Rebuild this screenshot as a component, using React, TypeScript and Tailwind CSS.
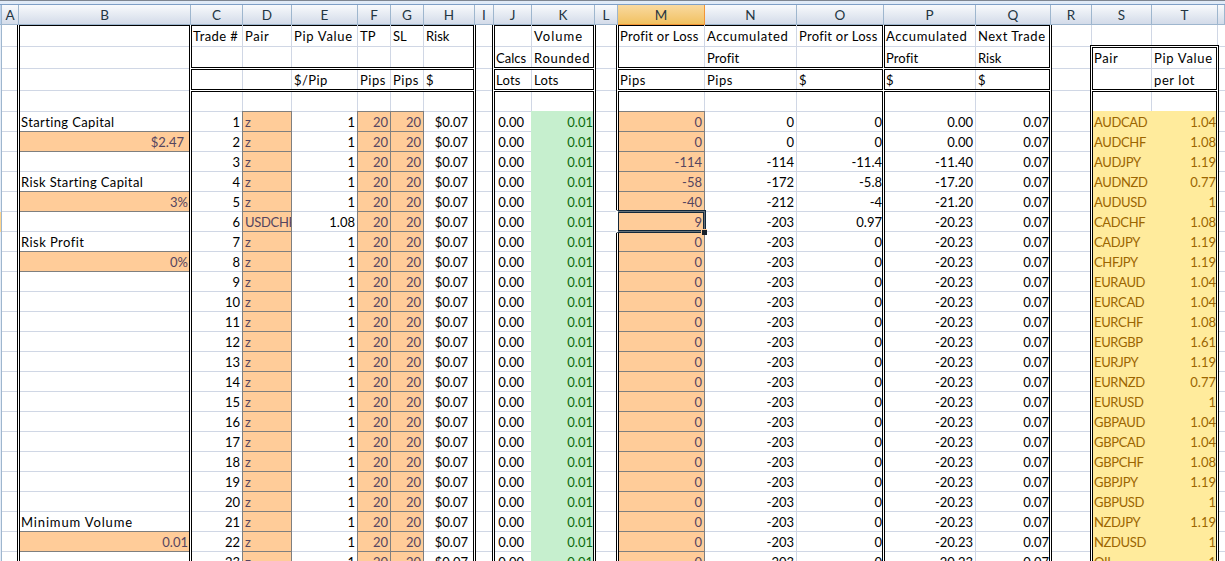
import React from "react";

type Align = "l" | "r";
type Tone = "input" | "green" | "yellow" | "plain";

interface Column {
  id: string;
  width: string;
  frame?: string;
  edgeLeft?: boolean;
  edgeRight?: boolean;
  grid?: "line" | "blank";
  double?: boolean;
  head?: [string, string, string];
  headClass?: string;
  align?: Align;
  tone?: Tone;
  pad?: string;
  values?: string[];
}

const ROWS = 23;
const fill = (value: string) => Array.from({ length: ROWS }, () => value);
const series = (first: string[], rest: string) => [...first, ...fill(rest)].slice(0, ROWS);

const pairs = ["AUDCAD", "AUDCHF", "AUDJPY", "AUDNZD", "AUDUSD", "CADCHF", "CADJPY", "CHFJPY", "EURAUD", "EURCAD", "EURCHF", "EURGBP", "EURJPY", "EURNZD", "EURUSD", "GBPAUD", "GBPCAD", "GBPCHF", "GBPJPY", "GBPUSD", "NZDJPY", "NZDUSD", "OIL"];
const pipValues = ["1.04", "1.08", "1.19", "0.77", "1", "1.08", "1.19", "1.19", "1.04", "1.04", "1.08", "1.61", "1.19", "0.77", "1", "1.04", "1.04", "1.08", "1.19", "1", "1.19", "1", "1"];

const capital = fill("");
capital[0] = "Starting Capital";
capital[1] = "$2.47";
capital[3] = "Risk Starting Capital";
capital[4] = "3%";
capital[6] = "Risk Profit";
capital[7] = "0%";
capital[20] = "Minimum Volume";
capital[21] = "0.01";
const capitalInputs = [1, 4, 7, 21];

const tracking: Record<string, string> = {
  "Starting Capital": "tracking-[0.38px]",
  "Risk Starting Capital": "tracking-[0.38px]",
  "Risk Profit": "tracking-[0.45px]",
  "Minimum Volume": "tracking-[0.85px]",
  "Trade #": "tracking-[0.4px]",
  Pair: "tracking-[0.6px]",
  "Pip Value": "tracking-[0.7px]",
  "per lot": "tracking-[0.6px]",
  Accumulated: "tracking-[0.65px]",
  "Profit or Loss": "tracking-[0.25px]",
  Profit: "tracking-[0.1px]",
  "Next Trade": "tracking-[0.55px]",
  Volume: "tracking-[1px]",
  Rounded: "tracking-[0.75px]",
  Pips: "tracking-[0.5px]",
  Lots: "tracking-[0.25px]",
  "$/Pip": "tracking-[0.4px]",
  USDCHF: "tracking-[-0.3px]",
};

const columns: Column[] = [
  { id: "A", width: "w-[17px]", frame: "border-r", grid: "blank" },
  { id: "B", width: "w-[172px]", frame: "border-x border-t", grid: "blank", values: capital },
  { id: "C", width: "w-[52px]", frame: "border-l border-t", edgeLeft: true, double: true, head: ["Trade #", "", ""], headClass: "-ml-px", align: "r", values: Array.from({ length: ROWS }, (_, i) => String(i + 1)) },
  { id: "D", width: "w-[49px]", frame: "border-t", double: true, head: ["Pair", "", ""], tone: "input", values: series(["z", "z", "z", "z", "z", "USDCHF"], "z") },
  { id: "E", width: "w-[66px]", frame: "border-t", double: true, head: ["Pip Value", "", "$/Pip"], align: "r", values: series(["1", "1", "1", "1", "1", "1.08"], "1") },
  { id: "F", width: "w-[33px]", frame: "border-t", double: true, head: ["TP", "", "Pips"], align: "r", tone: "input", values: fill("20") },
  { id: "G", width: "w-[33px]", frame: "border-t", double: true, head: ["SL", "", "Pips"], align: "r", tone: "input", values: fill("20") },
  { id: "H", width: "w-[51px]", frame: "border-r border-t", edgeRight: true, double: true, head: ["Risk", "", "$"], align: "r", pad: "pr-[5px]", values: fill("$0.07") },
  { id: "I", width: "w-[19px]", frame: "border-x", grid: "blank" },
  { id: "J", width: "w-[38px]", frame: "border-l border-t", edgeLeft: true, double: true, head: ["", "Calcs", "Lots"], headClass: "-ml-px", align: "r", pad: "pr-[7px]", values: fill("0.00") },
  { id: "K", width: "w-[63px]", frame: "border-r border-t", edgeRight: true, double: true, head: ["Volume", "Rounded", "Lots"], align: "r", tone: "green", pad: "pr-0", values: fill("0.01") },
  { id: "L", width: "w-[23px]", frame: "border-x", grid: "blank" },
  { id: "M", width: "w-[87px]", frame: "border-l border-t", edgeLeft: true, double: true, head: ["Profit or Loss", "", "Pips"], headClass: "-ml-px", align: "r", tone: "input", values: series(["0", "0", "-114", "-58", "-40", "9"], "0") },
  { id: "N", width: "w-[92px]", frame: "border-t", double: true, head: ["Accumulated", "Profit", "Pips"], align: "r", values: series(["0", "0", "-114", "-172", "-212"], "-203") },
  { id: "O", width: "w-[87px]", frame: "border-r border-t", edgeRight: true, double: true, head: ["Profit or Loss", "", "$"], align: "r", pad: "pr-0", values: series(["0", "0", "-11.4", "-5.8", "-4", "0.97"], "0") },
  { id: "P", width: "w-[92px]", frame: "border-l border-t", edgeLeft: true, double: true, head: ["Accumulated", "Profit", "$"], headClass: "-ml-px", align: "r", values: series(["0.00", "0.00", "-11.40", "-17.20", "-21.20"], "-20.23") },
  { id: "Q", width: "w-[75px]", frame: "border-r border-t", edgeRight: true, double: true, head: ["Next Trade", "Risk", "$"], align: "r", pad: "pr-0", values: fill("0.07") },
];

const GRID = "border-[#d0d7e5]";

function Cell({ children, height = "h-[20px]", align = "l", tone = "plain", pad = "", first = false, edgeLeft = false, edgeRight = false }: {
  children?: string; height?: string; align?: Align; tone?: Tone; pad?: string; first?: boolean; edgeLeft?: boolean; edgeRight?: boolean;
}) {
  const side = align === "r" ? `justify-end ${pad || "pr-[2px]"}` : `justify-start ${edgeLeft ? "pl-px" : "pl-[2px]"}`;
  const tones: Record<Tone, string> = {
    plain: `border-b ${GRID} text-black`,
    input: "border-b border-[#7f7f7f] bg-[#ffcc99] text-[#55455f]",
    green: "border-b border-[#c6efce] bg-[#c6efce] text-[#0c6b0c]",
    yellow: "border-b border-[#ffeb9c] bg-[#ffeb9c] text-[#9c6500] tracking-[-0.1px]",
  };
  const lead = first && tone === "input" ? "-mt-px h-[21px] border-t" : first && tone !== "plain" ? "-mt-px h-[21px]" : height;
  const bleed = tone === "input" ? `${edgeLeft ? "" : "-ml-px border-l"} ${edgeRight ? "" : "-mr-px border-r"}` : tone === "plain" ? "" : edgeLeft ? "-mr-px" : "-ml-px";
  return (
    <div className={`relative flex shrink-0 items-end overflow-hidden whitespace-nowrap ${lead} ${side} ${tones[tone]} ${bleed}`}>
      <span className={`leading-[18px] ${tracking[children ?? ""] ?? (tone === "yellow" && align === "l" ? "tracking-[-0.35px]" : "tracking-normal")}`}>{children}</span>
    </div>
  );
}

function DoubleRule({ left }: { left?: boolean }) {
  return <div className={`relative -mr-px h-[3px] shrink-0 border-y border-black bg-white ${left ? "-ml-px" : ""}`} />;
}

function HeadCell({ text, height, nudge = "" }: { text: string; height: string; nudge?: string }) {
  return (
    <div className={`flex shrink-0 items-end whitespace-nowrap pl-[2px] ${height}`}>
      <span className={`leading-[18px] ${nudge} ${tracking[text] ?? ""}`}>{text}</span>
    </div>
  );
}

function SheetColumn({ col }: { col: Column }) {
  const blank = col.grid === "blank" || col.edgeRight;
  const topped = col.frame?.includes("border-t");
  return (
    <div className={`flex h-full shrink-0 border-r ${col.width} ${blank ? "border-white" : GRID}`}>
      <div className={`flex min-w-0 flex-1 flex-col border-black ${col.frame ?? ""}`}>
        {col.double && col.head ? (
          <>
            <div className={`h-[21px] shrink-0 border-b ${GRID}`}><HeadCell text={col.head[0]} height="h-[19px]" nudge={col.headClass} /></div>
            <HeadCell text={col.head[1]} height="h-[20px]" nudge={col.headClass} />
            <DoubleRule left={col.edgeLeft} />
            <HeadCell text={col.head[2]} height="h-[19px]" nudge={col.headClass} />
            <DoubleRule left={col.edgeLeft} />
            <div className={`h-[20px] shrink-0 border-b ${GRID}`} />
          </>
        ) : (
          <>
            <Cell height={topped ? "h-[21px]" : "h-[22px]"} />
            <Cell height="h-[22px]" />
            <Cell height="h-[22px]" />
            <Cell height="h-[21px]" />
          </>
        )}
        {(col.values ?? fill("")).map((value, i) => {
          if (col.id === "B") {
            const input = capitalInputs.includes(i);
            return (
              <div key={i} className={`flex h-[20px] shrink-0 items-end border-b ${input ? "justify-end bg-[#ffcc99] text-[#55455f]" : "pl-px text-black"} ${input || capitalInputs.includes(i + 1) ? "border-[#7f7f7f]" : GRID} ${i === 1 ? "pr-[5px]" : input ? "pr-px" : ""}`}>
                <span className={`leading-[18px] ${tracking[value] ?? ""}`}>{value}</span>
              </div>
            );
          }
          return (
            <Cell key={i} first={i === 0} align={col.align} tone={col.tone} pad={col.pad} edgeLeft={col.edgeLeft} edgeRight={col.edgeRight}>
              {value}
            </Cell>
          );
        })}
      </div>
    </div>
  );
}

function Spacer() {
  return (
    <div className="flex w-[41px] shrink-0 border-r border-white">
      <div className="flex flex-1 flex-col border-l border-black">
        <div className={`-mr-px h-[20px] shrink-0 border-r ${GRID}`} />
        <div className="flex flex-1 flex-col border-r border-black">
          <Cell height="h-[2px]" />
          <Cell height="h-[22px]" />
          <Cell height="h-[22px]" />
          <Cell height="h-[21px]" />
          {fill("").map((_, i) => <Cell key={i} />)}
        </div>
      </div>
    </div>
  );
}

function LookupColumn({ width, left, head, values }: { width: string; left?: boolean; head: [string, string]; values: string[] }) {
  return (
    <div className={`flex shrink-0 flex-col ${width}`}>
      <div className={`h-[20px] shrink-0 border-r ${GRID}`} />
      <div className={`h-px shrink-0 bg-black ${left ? "-ml-px" : ""}`} />
      <div className="h-px shrink-0" />
      <div className={`flex flex-1 border-r ${left ? GRID : "border-white"}`}>
        <div className="flex min-w-0 flex-1 flex-col">
          <div className={`h-px shrink-0 bg-black ${left ? "-mr-px" : ""}`} />
          <div className={`flex min-w-0 flex-1 flex-col border-black ${left ? "border-l" : "border-r"}`}>
            <div className={`h-[21px] shrink-0 border-b ${GRID}`}><HeadCell text={head[0]} height="h-[19px]" nudge={left ? "-ml-px" : ""} /></div>
            <HeadCell text={head[1]} height="h-[20px]" />
            <DoubleRule left={left} />
            <div className={`h-[20px] shrink-0 border-b ${GRID}`} />
            {values.map((value, i) => (
              <Cell key={i} first={i === 0} align={left ? "l" : "r"} tone="yellow" pad="pr-0" edgeLeft={left}>{value}</Cell>
            ))}
          </div>
        </div>
      </div>
    </div>
  );
}

const headers = [
  ...columns.map(({ id, width }) => ({ id, width })),
  { id: "R", width: "w-[41px]" },
  { id: "S", width: "w-[60px]" },
  { id: "T", width: "w-[66px]" },
  { id: "", width: "w-[7px]" },
];

export default function App() {
  return (
    <div className="flex h-[561px] w-[1225px] flex-col overflow-hidden bg-white font-['Lato',sans-serif] text-[13px] text-black">
      <div className="h-[5px] shrink-0 border-b border-t border-b-[#7e9fc6] border-t-[#7d8590] bg-[#dfeaf7]" />
      <div className="flex h-[20px] shrink-0">
        <div className="w-[2px] shrink-0 border-b border-r border-[#9eb6ce] bg-[#b9d1ed]" />
        {headers.map(({ id, width }) => (
          <div key={id} className={`flex shrink-0 items-center justify-center border-b border-r pt-px text-[13.5px] text-[#243642] ${width} ${id === "M" ? "border-[#f29536] bg-linear-to-b from-[#f9d99f] to-[#f1c15f]" : "border-[#9eb6ce] bg-linear-to-b from-[#f8fafc] to-[#d3dbe9]"}`}>
            {id}
          </div>
        ))}
      </div>
      <div className="relative flex min-h-0 flex-1 overflow-hidden">
        <div className="w-[2px] shrink-0 border-r border-[#9eb6ce] bg-[#e4ecf7]">
          <div className="mt-[187px] h-[20px] bg-[#ffd58d]" />
        </div>
        {columns.map((col) => <SheetColumn key={col.id} col={col} />)}
        <Spacer />
        <LookupColumn width="w-[60px]" left head={["Pair", ""]} values={pairs} />
        <LookupColumn width="w-[66px]" head={["Pip Value", "per lot"]} values={pipValues} />
        <div className="flex w-[7px] shrink-0 flex-col">
          <div className="h-[20px] shrink-0" />
          <div className="flex flex-1 flex-col border-l border-black">
            <Cell height="h-[2px]" />
            <Cell height="h-[22px]" />
            <Cell height="h-[22px]" />
            <Cell height="h-[21px]" />
            {fill("").map((_, i) => <Cell key={i} />)}
          </div>
        </div>
        <div className="pointer-events-none absolute left-[616px] top-[185px] h-[23px] w-[90px] border-y border-l-2 border-r border-[#14283a] border-l-white">
          <div className="h-full border-y border-r border-[#66727a]">
            <div className="h-full border border-[#14283a]" />
          </div>
          <div className="absolute -bottom-[3px] -right-[2px] size-[6px] border-l border-t border-[#ffcc99] bg-[#17202a]" />
        </div>
      </div>
    </div>
  );
}
